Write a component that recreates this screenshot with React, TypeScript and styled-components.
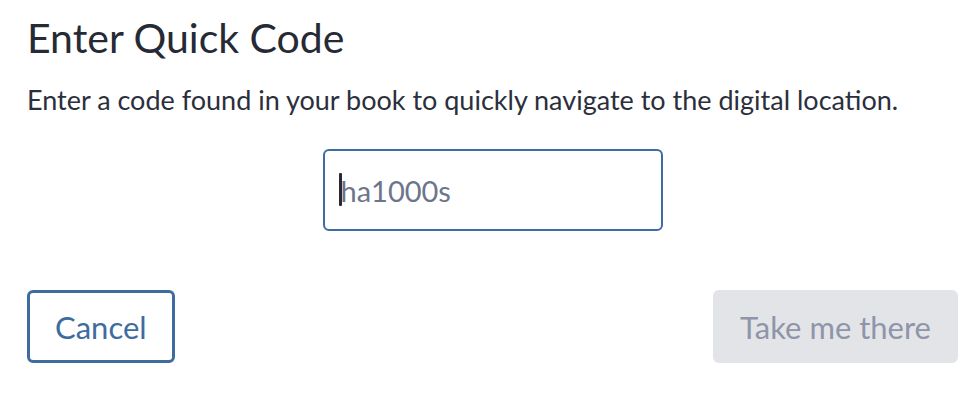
import { createGlobalStyle, styled } from 'styled-components';

const GlobalStyle = createGlobalStyle`
  html, body {
    margin: 0;
    background: #ffffff;
  }
  body {
    font-family: Lato, "Liberation Sans", sans-serif;
    color: #2b2f3b;
  }
`;

// dialog body

const Dialog = styled.section`
  display: flex;
  flex-direction: column;
  width: 931px;
  padding: 14px 0 0 27px;
`;

const Title = styled.h2`
  margin: 0;
  font-size: 41px;
  font-weight: 400;
  line-height: 48px;
  color: #262a35;
`;

const Description = styled.p`
  margin: 22px 0 0;
  font-size: 27px;
  line-height: 32px;
  color: #2b2f3b;
`;

// code field

const FieldRow = styled.div`
  display: flex;
  justify-content: center;
  margin-top: 33px;
`;

const FieldWrap = styled.div`
  position: relative;
  width: 340px;
  height: 82px;
`;

const CodeInput = styled.input`
  box-sizing: border-box;
  width: 100%;
  height: 100%;
  padding: 0 16px;
  border: 2px solid #3e6c9f;
  border-radius: 6px;
  outline: none;
  font-family: inherit;
  font-size: 29px;
  color: #2b2f3b;
  background: #fff;

  &::placeholder {
    color: #6c758b;
    opacity: 1;
  }
`;

const Caret = styled.span`
  position: absolute;
  left: 16px;
  top: 24px;
  width: 3px;
  height: 33px;
  border-radius: 1px;
  background: #262a35;
  pointer-events: none;
`;

// actions

const Actions = styled.div`
  display: flex;
  justify-content: space-between;
  align-items: center;
  margin-top: 59px;
`;

const Button = styled.button<{ $variant: 'outline' | 'disabled' }>`
  box-sizing: border-box;
  height: 73px;
  padding: 0 ${({ $variant }) => ($variant === 'outline' ? '25px' : '27px')};
  border-radius: 6px;
  font-family: inherit;
  font-size: 31px;
  cursor: ${({ $variant }) => ($variant === 'outline' ? 'pointer' : 'default')};
  border: ${({ $variant }) =>
    $variant === 'outline' ? '3px solid #3e6c9f' : '0'};
  color: ${({ $variant }) => ($variant === 'outline' ? '#3e6c9f' : '#8f95a9')};
  background: ${({ $variant }) => ($variant === 'outline' ? '#fff' : '#e3e4e8')};
`;

export default function App() {
  return (
    <>
      <GlobalStyle />
      <Dialog>
        <Title>Enter Quick Code</Title>
        <Description>
          Enter a code found in your book to quickly navigate to the digital
          location.
        </Description>
        <FieldRow>
          <FieldWrap>
            <CodeInput placeholder="ha1000s" aria-label="Quick code" />
            <Caret />
          </FieldWrap>
        </FieldRow>
        <Actions>
          <Button $variant="outline">Cancel</Button>
          <Button $variant="disabled" disabled>
            Take me there
          </Button>
        </Actions>
      </Dialog>
    </>
  );
}
